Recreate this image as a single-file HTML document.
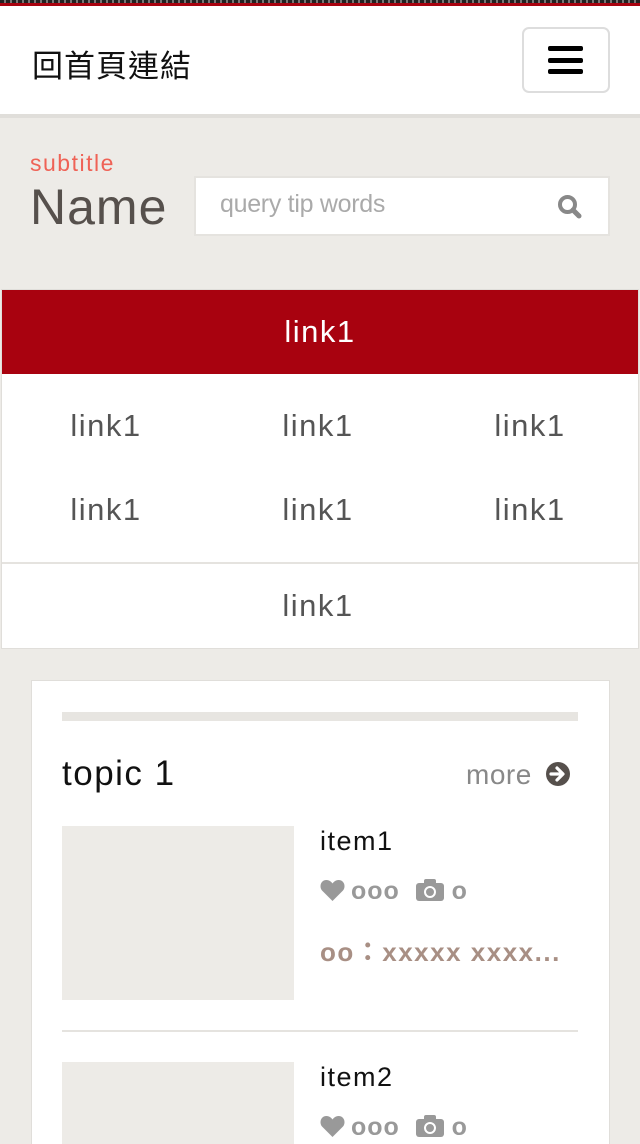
<!DOCTYPE html>
<html style="height:1144px;overflow:hidden"><head><meta charset="utf-8"><style>
*{margin:0;padding:0;box-sizing:border-box}
body{width:640px;height:1144px;overflow:hidden;background:#edebe7;font-family:"Liberation Sans","Noto Sans CJK TC",sans-serif;position:relative}
.a{position:absolute}
</style></head><body>
<div class="a" style="left:0;top:0;width:640px;height:3px;background:repeating-linear-gradient(90deg,#222 0 4px,#777 4px 6px)"></div>
<div class="a" style="left:0;top:3px;width:640px;height:3px;background:#a8020f"></div>
<div class="a" style="left:0;top:6px;width:640px;height:108px;background:#fff"></div>
<div class="a" style="left:0;top:114px;width:640px;height:4px;background:#e0deda"></div>
<div class="a" style="left:32px;top:41px;font-size:31px;color:#111;letter-spacing:1px">回首頁連結</div>
<div class="a" style="left:522px;top:27px;width:88px;height:66px;border:2px solid #ddd;border-radius:7px;background:#fff"></div>
<div class="a" style="left:548px;top:46px;width:35px;height:5px;background:#000;border-radius:2px"></div>
<div class="a" style="left:548px;top:58px;width:35px;height:5px;background:#000;border-radius:2px"></div>
<div class="a" style="left:548px;top:69px;width:35px;height:5px;background:#000;border-radius:2px"></div>
<div class="a" style="left:30px;top:150px;font-size:23px;color:#ef6256;letter-spacing:1.5px">subtitle</div>
<div class="a" style="left:30px;top:178px;font-size:50px;color:#56504c;letter-spacing:1px">Name</div>
<div class="a" style="left:194px;top:176px;width:416px;height:60px;background:#fff;border:2px solid #e5e3df"></div>
<div class="a" style="left:220px;top:190px;font-size:25px;color:#aaa;letter-spacing:-0.3px">query tip words</div>
<svg class="a" style="left:557px;top:194px" width="26" height="26" viewBox="0 0 26 26"><circle cx="10.5" cy="10.5" r="7.5" fill="none" stroke="#888" stroke-width="4"/><line x1="16" y1="16" x2="22" y2="22" stroke="#888" stroke-width="5" stroke-linecap="round"/></svg>
<div class="a" style="left:1px;top:289px;width:638px;height:360px;background:#fff;border:1px solid #e0deda"></div>
<div class="a" style="left:2px;top:290px;width:636px;height:84px;background:#a8020f;color:#fff;font-size:31px;text-align:center;line-height:84px;letter-spacing:1.5px">link1</div>
<div class="a" style="left:2px;top:562px;width:636px;height:2px;background:#e5e3df"></div>
<div class="a" style="left:0px;top:384px;width:636px;font-size:31px;color:#555;letter-spacing:1.5px;display:grid;grid-template-columns:1fr 1fr 1fr;text-align:center;line-height:84px">
<div>link1</div><div>link1</div><div>link1</div><div>link1</div><div>link1</div><div>link1</div></div>
<div class="a" style="left:0px;top:564px;width:636px;height:84px;font-size:31px;color:#555;text-align:center;line-height:84px;letter-spacing:1.5px">link1</div>
<div class="a" style="left:31px;top:680px;width:579px;height:464px;background:#fff;border:1px solid #e0deda;border-bottom:none"></div>
<div class="a" style="left:62px;top:712px;width:516px;height:9px;background:#e7e5e1"></div>
<div class="a" style="left:62px;top:754px;font-size:35px;color:#111;letter-spacing:1.5px">topic 1</div>
<div class="a" style="left:466px;top:759px;font-size:28px;color:#888;letter-spacing:0.5px">more</div>
<svg class="a" style="left:545px;top:761px" width="26" height="26" viewBox="0 0 26 26"><circle cx="13" cy="13" r="12" fill="#56504c"/><path d="M6 13h11M12 7l6 6-6 6" fill="none" stroke="#fff" stroke-width="3.2" stroke-linecap="round" stroke-linejoin="round"/></svg>
<div class="a" style="left:62px;top:826px;width:232px;height:174px;background:#edebe7"></div>
<div class="a" style="left:62px;top:1030px;width:516px;height:2px;background:#e5e3df"></div>
<div class="a" style="left:62px;top:1062px;width:232px;height:82px;background:#edebe7"></div>
<div class="a" style="left:320px;top:826px;font-size:27px;color:#111;letter-spacing:1.5px">item1</div>
<div class="a" style="left:320px;top:1062px;font-size:27px;color:#111;letter-spacing:1.5px">item2</div>
<div class="a" style="left:320px;top:877px;font-size:25px;color:#999;letter-spacing:1px;white-space:nowrap;font-weight:bold">
<svg width="25" height="22" viewBox="0 0 25 22" style="vertical-align:-2px;margin-right:6px"><path d="M12.5 22L2 11.5C-1 8 0.5 1 6.5 1c3 0 5 2 6 3.5C13.5 3 15.5 1 18.5 1c6 0 7.5 7 4.5 10.5z" fill="#999"/></svg>ooo &nbsp;<svg width="28" height="22" viewBox="0 0 28 22" style="vertical-align:-2px"><rect x="0" y="4" width="28" height="18" rx="3" fill="#999"/><rect x="8" y="0" width="12" height="6" rx="2" fill="#999"/><circle cx="14" cy="13" r="5" fill="none" stroke="#fff" stroke-width="2"/></svg> o</div>
<div class="a" style="left:320px;top:1113px;font-size:25px;color:#999;letter-spacing:1px;white-space:nowrap;font-weight:bold">
<svg width="25" height="22" viewBox="0 0 25 22" style="vertical-align:-2px;margin-right:6px"><path d="M12.5 22L2 11.5C-1 8 0.5 1 6.5 1c3 0 5 2 6 3.5C13.5 3 15.5 1 18.5 1c6 0 7.5 7 4.5 10.5z" fill="#999"/></svg>ooo &nbsp;<svg width="28" height="22" viewBox="0 0 28 22" style="vertical-align:-2px"><rect x="0" y="4" width="28" height="18" rx="3" fill="#999"/><rect x="8" y="0" width="12" height="6" rx="2" fill="#999"/><circle cx="14" cy="13" r="5" fill="none" stroke="#fff" stroke-width="2"/></svg> o</div>
<div class="a" style="left:320px;top:932px;font-size:26px;color:#a88f84;letter-spacing:1.5px;white-space:nowrap;font-weight:bold">oo：xxxxx xxxx...</div>
</body></html>
